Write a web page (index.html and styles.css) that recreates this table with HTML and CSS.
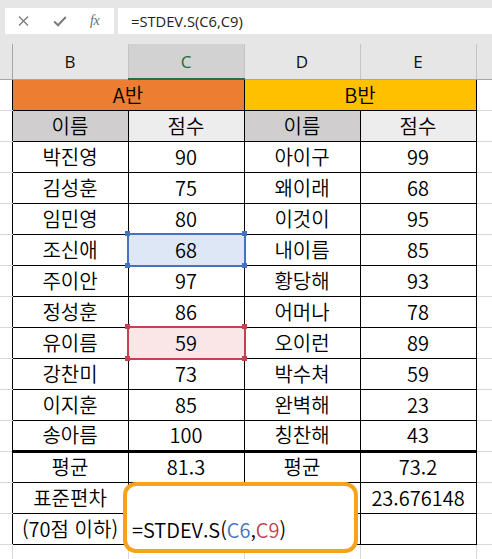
FILE: index.html
```html
<!DOCTYPE html>
<html lang="ko">
<head>
<meta charset="utf-8">
<link rel="stylesheet" href="styles.css">
</head>
<body>
<div class="toolbar">
  <div class="namebox">
    <svg class="ico ico-x" width="11" height="10" viewBox="0 0 11 10"><path d="M1 0.5 L10 9.5 M10 0.5 L1 9.5" stroke="#7b7b7b" stroke-width="1.3" fill="none"/></svg>
    <svg class="ico ico-check" width="14" height="11" viewBox="0 0 14 11"><path d="M1.2 5.5 L5 9.3 L12.8 1" stroke="#7b7b7b" stroke-width="2" fill="none"/></svg>
    <span class="ico ico-fx">fx</span>
  </div>
  <div class="formula">=STDEV.S(C6,C9)</div>
</div>
<div class="sheet">
<table class="grid">
  <colgroup>
    <col class="c-a"><col class="c-b"><col class="c-b"><col class="c-b"><col class="c-b"><col class="c-f">
  </colgroup>
  <tr class="colhdr">
    <th class="ha"></th><th>B</th><th class="hsel">C</th><th>D</th><th>E</th><th class="hf"></th>
  </tr>
  <tr>
    <td class="ca"></td><td colspan="2" class="orange">A반</td><td colspan="2" class="yellow">B반</td><td class="cf"></td>
  </tr>
  <tr>
    <td class="ca"></td><td class="g1">이름</td><td class="g2">점수</td><td class="g1">이름</td><td class="g2">점수</td><td class="cf"></td>
  </tr>
  <tr><td class="ca"></td><td>박진영</td><td>90</td><td>아이구</td><td>99</td><td class="cf"></td></tr>
  <tr><td class="ca"></td><td>김성훈</td><td>75</td><td>왜이래</td><td>68</td><td class="cf"></td></tr>
  <tr><td class="ca"></td><td>임민영</td><td>80</td><td>이것이</td><td>95</td><td class="cf"></td></tr>
  <tr><td class="ca"></td><td>조신애</td><td class="selcell blue">68<span class="selbox"><i class="h tl"></i><i class="h tr"></i><i class="h bl"></i><i class="h br"></i></span></td><td>내이름</td><td>85</td><td class="cf"></td></tr>
  <tr><td class="ca"></td><td>주이안</td><td>97</td><td>황당해</td><td>93</td><td class="cf"></td></tr>
  <tr><td class="ca"></td><td>정성훈</td><td>86</td><td>어머나</td><td>78</td><td class="cf"></td></tr>
  <tr><td class="ca"></td><td>유이름</td><td class="selcell red">59<span class="selbox"><i class="h tl"></i><i class="h tr"></i><i class="h bl"></i><i class="h br"></i></span></td><td>오이런</td><td>89</td><td class="cf"></td></tr>
  <tr><td class="ca"></td><td>강찬미</td><td>73</td><td>박수쳐</td><td>59</td><td class="cf"></td></tr>
  <tr><td class="ca"></td><td>이지훈</td><td>85</td><td>완벽해</td><td>23</td><td class="cf"></td></tr>
  <tr class="lastdata"><td class="ca"></td><td>송아름</td><td>100</td><td>칭찬해</td><td>43</td><td class="cf"></td></tr>
  <tr><td class="ca"></td><td>평균</td><td>81.3</td><td>평균</td><td>73.2</td><td class="cf"></td></tr>
  <tr><td class="ca"></td><td>표준편차</td><td></td><td></td><td>23.676148</td><td class="cf"></td></tr>
  <tr><td class="ca"></td><td>(70점 이하)</td><td></td><td></td><td></td><td class="cf"></td></tr>
  <tr class="empty"><td class="ca"></td><td></td><td></td><td></td><td></td><td class="cf"></td></tr>
</table>
<div class="callout">=STDEV.S(<span class="ref-blue">C6</span>,<span class="ref-red">C9</span>)</div>
</div>
</body>
</html>
```
FILE: styles.css
```css
* { box-sizing: border-box; }
html, body { margin: 0; padding: 0; }
body {
  width: 492px;
  height: 559px;
  overflow: hidden;
  background: #fff;
  font-family: "Noto Sans CJK KR", "Noto Sans", sans-serif;
}

.toolbar {
  height: 44px;
  background: #e6e6e6;
  display: flex;
  align-items: flex-start;
  padding: 8px 0 0 5px;
  gap: 4px;
}
.namebox {
  width: 109px;
  height: 26px;
  background: #fff;
  display: flex;
  align-items: center;
  padding-left: 13px;
}
.ico { display: block; flex: none; }
.ico-check { margin-left: 24px; }
.ico-fx {
  margin-left: 23px;
  font-family: "Liberation Serif", serif;
  font-style: italic;
  font-size: 14px;
  color: #6b6b6b;
  line-height: 1;
  letter-spacing: -0.5px;
}
.formula {
  flex: 1;
  height: 26px;
  background: #fff;
  font-family: "Open Sans", sans-serif;
  font-size: 14.7px;
  line-height: 26px;
  padding-left: 13px;
  color: #222;
}

.sheet { position: relative; }

.grid {
  border-collapse: collapse;
  table-layout: fixed;
  width: 492px;
}
.c-a { width: 12px; }
.c-b { width: 116px; }
.c-f { width: 16px; }

.colhdr th {
  height: 35px;
  padding: 0;
  background: #e6e6e6;
  font-family: "Open Sans", sans-serif;
  font-weight: normal;
  font-size: 17px;
  color: #111;
  border-right: 1px solid #c4c4c4;
  border-bottom: 1px solid #a6a6a6;
  vertical-align: middle;
}
.colhdr th.ha { border-right: 1px solid #a6a6a6; }
.colhdr th.hsel {
  background: #d2d2d2;
  color: #1e6b3e;
  border-bottom: 2px solid #217346;
}

.grid td {
  height: 31px;
  padding: 0;
  text-align: center;
  vertical-align: middle;
  font-size: 20px;
  font-weight: 350;
  line-height: 1;
  color: #000;
  border: 1px solid #000;
  white-space: nowrap;
}
.grid td.ca {
  border-left: none;
  border-right: none;
  border-top: 1px solid #d9d9d9;
  border-bottom: 1px solid #d9d9d9;
}
.grid td.cf {
  border-left: none;
  border-right: 1px solid #d9d9d9;
  border-top: 1px solid #d9d9d9;
  border-bottom: 1px solid #d9d9d9;
}
.grid tr.empty td {
  border-top: none;
  border-left: 1px solid #d9d9d9;
  border-right: 1px solid #d9d9d9;
  border-bottom: 1px solid #d9d9d9;
}
.grid tr.empty td.ca { border-left: none; }
.grid tr.lastdata td { border-bottom: 3px solid #000; }
.grid tr.lastdata td.ca,
.grid tr.lastdata td.cf { border-bottom: 1px solid #d9d9d9; }

.orange { background: #ed7d31; }
.yellow { background: #ffc000; }
.g1 { background: #d0cece; }
.g2 { background: #ededed; }

.selcell { position: relative; }
.selcell.blue { background: #dde7f5; }
.selcell.red { background: #fbe6e7; }
.selbox {
  position: absolute;
  left: -2px;
  top: -2px;
  right: -2px;
  bottom: -2px;
  border: 2px solid #4472c4;
}
.red .selbox { border-color: #c0434f; }
.h {
  position: absolute;
  width: 5px;
  height: 5px;
  background: #4472c4;
}
.red .h { background: #c0434f; }
.h.tl { left: -3.5px; top: -3.5px; }
.h.tr { right: -3.5px; top: -3.5px; }
.h.bl { left: -3.5px; bottom: -3.5px; }
.h.br { right: -3.5px; bottom: -3.5px; }

.callout {
  position: absolute;
  left: 123px;
  top: 438px;
  width: 235px;
  height: 71px;
  border: 4px solid #f6a21a;
  border-radius: 13px;
  background: #fff;
  padding: 28px 0 0 5px;
  font-size: 20px;
  font-weight: 350;
  line-height: 31px;
  color: #000;
  white-space: nowrap;
}
.ref-blue { color: #4472c4; }
.ref-red { color: #c0434f; }
```
